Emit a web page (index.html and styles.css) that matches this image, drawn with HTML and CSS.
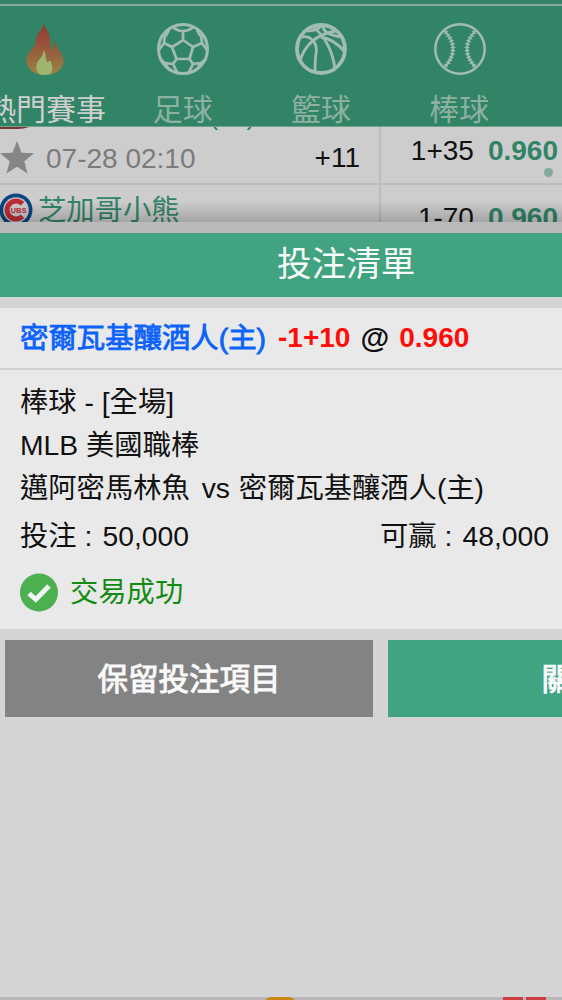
FILE: index.html
```html
<!DOCTYPE html>
<html lang="zh-Hant">
<head>
<meta charset="utf-8">
<title>投注清單</title>
<link rel="stylesheet" href="styles.css">
</head>
<body>
<div class="screen">
  <header class="topbar"></header>
  <nav class="sports">
    <div class="sport active">
      <svg class="sport-icon" viewBox="0 0 52 52">
        <defs>
          <linearGradient id="flame" x1="0" y1="0" x2="0" y2="1">
            <stop offset="0" stop-color="#93382f"/><stop offset=".4" stop-color="#98533a"/><stop offset="1" stop-color="#978449"/>
          </linearGradient>
        </defs>
        <path fill="url(#flame)" d="M24.500 0.500C25 4 28 6 30 11C32 16 31 22 33 27C35.500 25 35 21 35.500 18C37 19 37.500 23 40 27C43 31 45 35 44.500 40C43 47 37 52 26 52C15 52 8.500 46 7.500 39C7 32 12 27 16 22C17 16 17 14 19 11C22 7 24 5 24.500 0.500Z"/>
        <path fill="#9fb56d" d="M25 27C27 31 26 35 28 39C30 39 30 37.500 31 37.500C34 42 34 49 31 51Q26 53 20 51C16 47 17 40 20 37C23 34 24 31 25 27Z"/>
      </svg>
      <span class="sport-name">熱門賽事</span>
    </div>
    <div class="sport">
      <svg class="sport-icon outline" viewBox="0 0 52 52">
        <circle cx="26" cy="26" r="24.500" stroke-width="3"/>
        <path stroke-width="2.700" d="M26 17L36 24L32.500 36H19.500L15 24ZM26 17V8M36 24L45 20M32.500 36L36 41M19.500 36L16 41M15 24L7 20M16 4Q20 8 26 8Q32 8 36 4M8 11L7 20L2 27M44 11L45 20L50 27M9 13L12 7M43 13L40 7M3 36L8 40L16 41L20 49M49 36L44 40L36 41L32 49M8 40L11 45M44 40L41 45"/>
      </svg>
      <span class="sport-name">足球</span>
    </div>
    <div class="sport">
      <svg class="sport-icon outline" viewBox="0 0 52 52">
        <circle cx="26" cy="26" r="24" stroke-width="3.800"/>
        <path stroke-width="2.800" d="M18 4C30 13 38 29 40 46M28 2C27 8 34 12 46 14M12 8C16 8 23 7 26 3M6 14C17 12 23 21 21 31C20 38 20 43 20 49M5 38C9 24 20 11 41 8M26 14C37 16 43 21 49 28"/>
      </svg>
      <span class="sport-name">籃球</span>
    </div>
    <div class="sport">
      <svg class="sport-icon outline" viewBox="0 0 52 52">
        <circle cx="26" cy="26" r="24.700" stroke-width="2.500"/>
        <path stroke-width="1.800" d="M10 7Q28 26 10 45M42 7Q24 26 42 45"/>
        <path stroke-width="4.500" stroke-dasharray="1.500 1.800" d="M11.500 9Q26.500 26 11.500 43M40.500 9Q25.500 26 40.500 43"/>
      </svg>
      <span class="sport-name">棒球</span>
    </div>
  </nav>

  <main class="matches">
    <div class="match-row previous">
      <div class="info team"><span class="red-badge"></span><span class="previous-name">辛辛那提紅人(主)</span></div>
      <div class="odds"></div>
    </div>
    <div class="match-row schedule">
      <div class="info">
        <svg class="star" viewBox="0 0 34 33"><path fill="#868686" d="M17 0L21.500 11.700L34 12.300L24.300 20.300L27.500 32.500L17 25.700L6.500 32.500L9.700 20.300L0 12.300L12.500 11.700Z"/></svg>
        <time class="time">07-28 02:10</time>
        <span class="more">+11</span>
      </div>
      <div class="odds"><span>1+35</span><b>0.960</b><i class="dot"></i></div>
    </div>
    <div class="match-row next">
      <div class="info team">
        <svg class="cubs" viewBox="0 0 34 34">
          <circle cx="17" cy="17" r="16.500" fill="#084783"/>
          <circle cx="17" cy="17" r="12.800" fill="#d0cccc"/>
          <path d="M23.500 10.700A9 9 0 1 0 23.500 23.300" fill="none" stroke="#bd2d36" stroke-width="5"/>
          <text x="11.500" y="20" class="cubs-text">UBS</text>
        </svg>
        <span class="next-name">芝加哥小熊</span>
      </div>
      <div class="odds"><span>1-70</span><b>0.960</b></div>
    </div>
  </main>

  <section class="slip">
    <h1 class="slip-title">投注清單</h1>
    <article class="bet">
      <div class="pick"><span class="pick-team">密爾瓦基釀酒人(主)</span><span class="red">-1+10</span><span class="at">@</span><span class="red">0.960</span></div>
      <div class="details">
        <p class="line">棒球 - [全場]</p>
        <p class="line">MLB 美國職棒</p>
        <p class="line">邁阿密馬林魚 <span class="versus">vs</span> 密爾瓦基釀酒人(主)</p>
        <p class="amounts"><span>投注<span class="colon">:</span>50,000</span><span>可贏<span class="colon">:</span>48,000</span></p>
        <p class="status">
          <svg class="check" viewBox="0 0 38 38"><circle cx="19" cy="19" r="19" fill="#4caf50"/><path d="M9 20L15.800 26L29 12.500" fill="none" stroke="#f4f4f4" stroke-width="4.800"/></svg>
          <span class="status-text">交易成功</span>
        </p>
      </div>
    </article>
    <div class="actions">
      <button class="button keep">保留投注項目</button>
      <button class="button close">關閉</button>
    </div>
  </section>
  <footer class="bottom"><span class="coin"></span><span class="gift"><i></i><i></i></span></footer>
</div>
</body>
</html>
```
FILE: styles.css
```css
* { box-sizing: border-box; }
body {
  margin: 0;
  font-family: "Liberation Sans", "Noto Sans CJK TC", sans-serif;
  font-size: 28.3px;
  color: #111;
  background: #d4d4d4;
}
.screen {
  display: flex;
  flex-direction: column;
  width: 562px;
  height: 1000px;
  overflow: hidden;
}
.topbar {
  flex: none;
  height: 6px;
  background: #328467;
  border-bottom: 2px solid #8ba89c;
}
.sports {
  flex: none;
  display: grid;
  grid-template-columns: repeat(5, 138.2px);
  height: 121px;
  margin-left: -24.5px;
  padding-top: 17px;
  background: #328467;
  border-bottom: 1px solid #70a18d;
}
.sport {
  display: flex;
  flex-direction: column;
  align-items: center;
  gap: 15px;
  color: #8db1a2;
}
.sport.active { color: #cfcfcf; }
.active .sport-name { margin-left: 3px; }
.sport-icon { flex: none; width: 52px; height: 52px; margin-left: 1px; overflow: visible; }
.sport-icon.outline { fill: none; stroke: #a1bcb1; }
.sport-name { font-size: 30px; line-height: 40px; height: 36px; white-space: nowrap; }

.matches {
  flex: none;
  height: 95px;
  overflow: hidden;
  background: #cdcdcd;
  position: relative;
}
.matches::after {
  content: "";
  position: absolute;
  inset: 74px 0 0;
  background: linear-gradient(rgba(0,0,0,0), rgba(0,0,0,.2));
}
.match-row { display: grid; grid-template-columns: 381px 181px; }
.info { display: flex; align-items: center; border-right: 2px solid #bcbcbc; }
.odds { display: flex; justify-content: flex-end; padding-right: 4px; }
.odds b { color: #328467; margin-left: 14px; }
.previous { height: 5px; overflow: hidden; }
.previous .team { height: 5px; align-items: flex-end; }
.previous-name { line-height: 32px; padding-bottom: 2px; }
.team { color: #328467; gap: 5px; }
.red-badge {
  flex: none;
  width: 34px;
  height: 34px;
  margin-bottom: 3px;
  border-radius: 0 0 50% 0 / 0 0 20% 0;
  background: #74372f;
}
.schedule { height: 53px; border-bottom: 2px solid #bcbcbc; }
.star { flex: none; width: 34px; height: 33px; }
.time { margin-left: 12px; padding-top: 2px; color: #7b7b7b; font-size: 28px; }
.more { margin-left: auto; margin-right: 19px; font-size: 28px; }
.schedule .odds { position: relative; font-size: 28px; line-height: 37px; }
.dot {
  position: absolute;
  right: 9px;
  bottom: 6px;
  width: 9px;
  height: 9px;
  border-radius: 50%;
  background: #83aa9b;
}
.next .info { height: 50px; }
.next-name { padding-bottom: 5px; }
.next .odds { font-size: 28px; line-height: 65px; }
.cubs { flex: none; width: 34px; height: 34px; margin-left: -1px; }
.cubs-text {
  font: bold 7.6px "Liberation Sans", sans-serif;
  fill: #bd2d36;
  stroke: #d0cccc;
  stroke-width: 1.6px;
  paint-order: stroke;
}

.slip { flex: none; border-top: 11px solid #bababa; }
.slip-title {
  height: 64px;
  margin: 0;
  padding-left: 277px;
  background: #41a380;
  color: #f7fbf9;
  font-size: 34.6px;
  font-weight: 400;
  line-height: 62px;
}
.bet { margin-top: 11px; background: #e9e9e9; }
.pick {
  display: flex;
  height: 62px;
  padding-left: 20px;
  border-bottom: 2px solid #d0d0d0;
  line-height: 60px;
  font-weight: 700;
}
.pick-team {
  margin-right: 12px;
  color: #0b62fb;
  font-size: 28.4px;
  font-weight: 400;
  -webkit-text-stroke: .8px #0b62fb;
}
.red { color: #fe0d09; font-size: 28px; }
.at { margin: 0 10px; font-size: 29.5px; }
.details { height: 259px; padding: 11px 13px 0 20px; }
.details p { margin: 0; }
.line { height: 43px; line-height: 43px; white-space: nowrap; }
.versus { margin: 0 1px 0 4px; }
.amounts { display: flex; justify-content: space-between; height: 52px; line-height: 52px; }
.colon { margin: 0 10px 0 8px; }
.status { display: flex; align-items: center; gap: 12px; height: 60px; color: #128b12; }
.status-text { padding-bottom: 5px; }
.check { flex: none; width: 38px; height: 39px; }
.actions { display: grid; grid-template-columns: 368px 368px; gap: 15px; padding: 11px 0 0 5px; }
.button {
  height: 77px;
  padding: 0 0 4px;
  border: 0;
  color: #fafafa;
  font: 400 30.5px "Liberation Sans", "Noto Sans CJK TC", sans-serif;
  -webkit-text-stroke: 1px #fafafa;
}
.keep { background: #838383; }
.close { background: #41a380; }

.bottom {
  flex: none;
  display: flex;
  height: 3px;
  margin-top: auto;
  padding-left: 262px;
  background: #b8b8b8;
  overflow: hidden;
}
.coin { width: 36px; height: 20px; flex: none; border-radius: 14px; background: #cc8614; }
.gift { display: flex; gap: 3px; margin-left: 205px; }
.gift i { width: 20px; height: 3px; background: #cc3c40; }
```
